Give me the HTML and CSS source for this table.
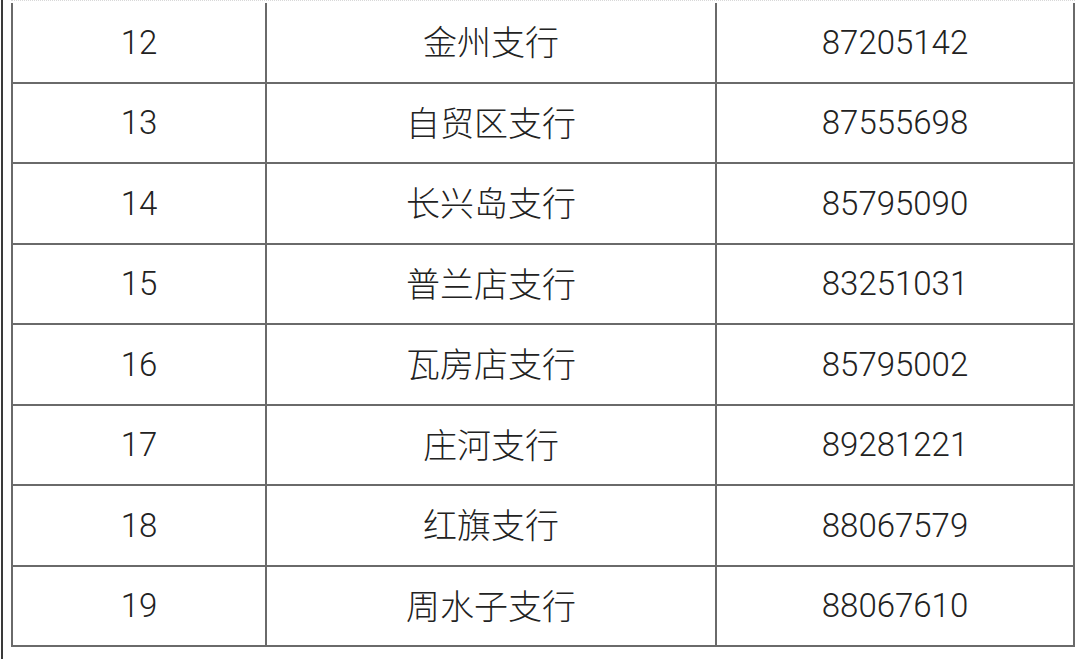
FILE: index.html
```html
<!DOCTYPE html>
<html lang="zh-CN">
<head>
<meta charset="utf-8">
<title>支行电话</title>
<link rel="stylesheet" href="styles.css">
</head>
<body>
<div class="page">
  <div class="edge"></div>
  <div class="table">
    <div class="row"><div class="cell num">12</div><div class="cell name">金州支行</div><div class="cell num">87205142</div></div>
    <div class="row"><div class="cell num">13</div><div class="cell name">自贸区支行</div><div class="cell num">87555698</div></div>
    <div class="row"><div class="cell num">14</div><div class="cell name">长兴岛支行</div><div class="cell num">85795090</div></div>
    <div class="row"><div class="cell num">15</div><div class="cell name">普兰店支行</div><div class="cell num">83251031</div></div>
    <div class="row"><div class="cell num">16</div><div class="cell name">瓦房店支行</div><div class="cell num">85795002</div></div>
    <div class="row"><div class="cell num">17</div><div class="cell name">庄河支行</div><div class="cell num">89281221</div></div>
    <div class="row"><div class="cell num">18</div><div class="cell name">红旗支行</div><div class="cell num">88067579</div></div>
    <div class="row"><div class="cell num">19</div><div class="cell name">周水子支行</div><div class="cell num">88067610</div></div>
  </div>
</div>
</body>
</html>
```
FILE: styles.css
```css
html, body {
  margin: 0;
  padding: 0;
  background: #ffffff;
}
body {
  width: 1080px;
  height: 659px;
  overflow: hidden;
  font-family: Roboto, "Liberation Sans", "Noto Sans CJK SC", sans-serif;
  color: #222;
}
.page {
  display: flex;
  height: 659px;
}
.edge {
  width: 2px;
  margin-left: 1px;
  background: #3a3a3a;
  height: 659px;
}
.table {
  margin-left: 8px;
  width: 1064px;
  padding-top: 2px;
  border-top: 1px dotted #d8d8d8;
  display: flex;
  flex-direction: column;
  align-self: flex-start;
}
.row {
  display: grid;
  grid-template-columns: 256px 450px 358px;
  height: 80.5px;
  box-sizing: border-box;
  border-bottom: 2px solid #6a6a6a;
}
.cell {
  display: flex;
  align-items: center;
  justify-content: center;
  border-right: 2px solid #6a6a6a;
  box-sizing: border-box;
}
.cell:first-child {
  border-left: 2px solid #6a6a6a;
}
.num {
  font-size: 33px;
  font-weight: 300;
}
.name {
  font-family: "Noto Sans CJK SC", sans-serif;
  font-size: 34px;
  font-weight: 300;
  padding-bottom: 3px;
}
```
